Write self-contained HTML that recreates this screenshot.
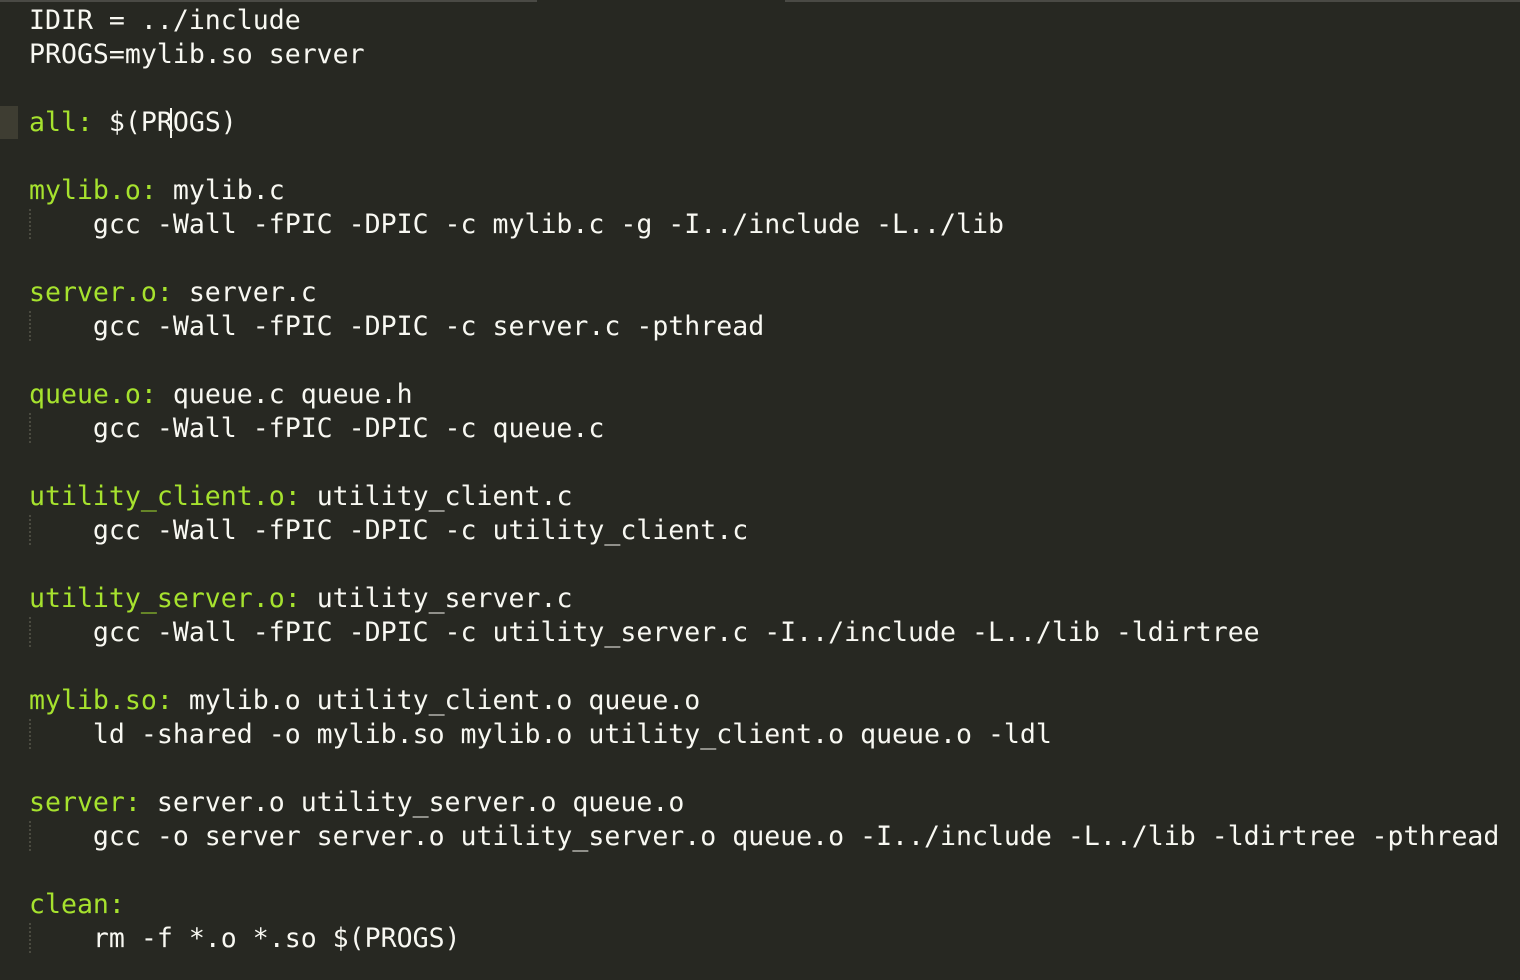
<!DOCTYPE html>
<html><head><meta charset="utf-8"><style>
html,body{margin:0;padding:0;background:#272822;width:1520px;height:980px;overflow:hidden}
.top{position:absolute;top:0;left:0;width:1520px;height:2px;background:#4a4a45}
.gap{position:absolute;top:0;left:537px;width:248px;height:2px;background:#272822}
.cur{position:absolute;left:0;top:106px;width:18px;height:33px;background:#3e3d32}
pre{position:absolute;left:29px;top:4px;margin:0;font-family:"DejaVu Sans Mono","Liberation Mono",monospace;font-size:26.55px;line-height:34px;color:#f8f8f2;letter-spacing:0}
.g{color:#a6e22e}
.guide{position:absolute;left:29px;width:0;border-left:2px dotted #4a4a40;height:30px}
.caret{position:absolute;left:170px;top:108px;width:2px;height:30px;background:#f8f8f0}
</style></head><body>
<div class="top"></div><div class="gap"></div>
<div class="cur"></div>
<div class="guide" style="top:209px"></div>
<div class="guide" style="top:311px"></div>
<div class="guide" style="top:413px"></div>
<div class="guide" style="top:515px"></div>
<div class="guide" style="top:617px"></div>
<div class="guide" style="top:719px"></div>
<div class="guide" style="top:821px"></div>
<div class="guide" style="top:923px"></div>
<pre>IDIR = ../include
PROGS=mylib.so server

<span class="g">all:</span> $(PROGS)

<span class="g">mylib.o:</span> mylib.c
    gcc -Wall -fPIC -DPIC -c mylib.c -g -I../include -L../lib

<span class="g">server.o:</span> server.c
    gcc -Wall -fPIC -DPIC -c server.c -pthread

<span class="g">queue.o:</span> queue.c queue.h
    gcc -Wall -fPIC -DPIC -c queue.c

<span class="g">utility_client.o:</span> utility_client.c
    gcc -Wall -fPIC -DPIC -c utility_client.c

<span class="g">utility_server.o:</span> utility_server.c
    gcc -Wall -fPIC -DPIC -c utility_server.c -I../include -L../lib -ldirtree

<span class="g">mylib.so:</span> mylib.o utility_client.o queue.o
    ld -shared -o mylib.so mylib.o utility_client.o queue.o -ldl

<span class="g">server:</span> server.o utility_server.o queue.o
    gcc -o server server.o utility_server.o queue.o -I../include -L../lib -ldirtree -pthread

<span class="g">clean:</span>
    rm -f *.o *.so $(PROGS)</pre>
<div class="caret"></div>
</body></html>
